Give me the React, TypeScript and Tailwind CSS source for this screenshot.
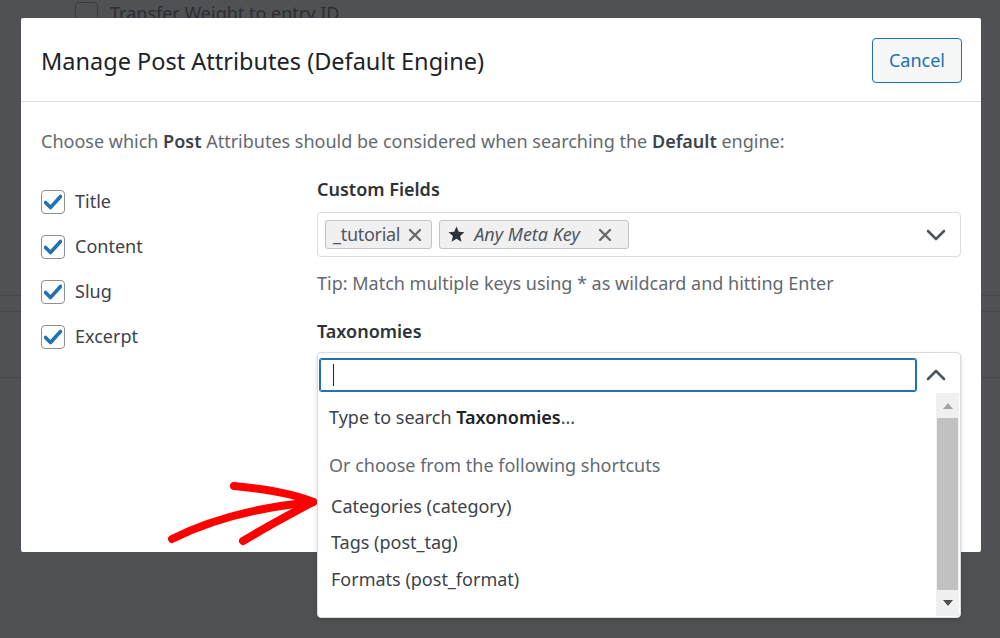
import React from 'react';

const font = { fontFamily: '"Noto Sans", "Open Sans", sans-serif' };

const CheckRow: React.FC<{ label: string }> = ({ label }) => (
  <label className="flex items-center gap-[10px] h-[45px]">
    <span className="w-[24px] h-[24px] rounded-[4px] border border-[#8c8f94] bg-white flex items-center justify-center">
      <svg width="18" height="16" viewBox="0 0 18 16">
        <path d="M1.5 8.5 L6.5 13.5 L16.5 2.5" fill="none" stroke="#2271b1" strokeWidth="3.6" strokeLinecap="round" strokeLinejoin="round" />
      </svg>
    </span>
    <span className="text-[18px] text-[#3c434a]">{label}</span>
  </label>
);

const XIcon = () => (
  <svg width="14" height="14" viewBox="0 0 14 14">
    <path d="M2 2 L12 12 M12 2 L2 12" stroke="#6b6b6b" strokeWidth="2.4" strokeLinecap="round" />
  </svg>
);

const Chevron: React.FC<{ up?: boolean }> = ({ up }) => (
  <svg width="20" height="12" viewBox="0 0 20 12">
    <path d={up ? 'M2 10 L10 2 L18 10' : 'M2 2 L10 10 L18 2'} fill="none" stroke="#50575e" strokeWidth="2.6" strokeLinecap="round" strokeLinejoin="round" />
  </svg>
);

export default function App() {
  return (
    <div className="relative w-[1000px] h-[638px] overflow-hidden bg-[#505155]" style={font}>
      {/* page behind the overlay */}
      <div className="flex items-center gap-[12px] pl-[75px] h-[26px]">
        <span className="w-[23px] h-[23px] rounded-[4px] border border-[#3a3b3f]" />
        <span className="text-[18px] text-[#2d2e32]">Transfer Weight to entry ID</span>
      </div>
      <div className="mt-[269px] h-[17px] border-y border-[#46474b]" />
      <div className="mt-[65px] border-t border-[#46474b]" />

      {/* modal */}
      <div className="absolute left-[21px] top-[18px] w-[960px] h-[534px] bg-white rounded-[2px]">
        <div className="flex items-center justify-between h-[84px] pt-[2px] pl-[20px] pr-[19px] border-b border-[#dcdcde]">
          <h1 className="mt-[2px] text-[23.5px] text-[#1d2327]">Manage Post Attributes (Default Engine)</h1>
          <button className="w-[90px] h-[45px] rounded-[4px] border border-[#2271b1] bg-[#f6f7f7] text-[#2271b1] text-[18px]">
            Cancel
          </button>
        </div>

        <div className="px-[20px] pt-[26px]">
          <p className="text-[18px] text-[#646970] leading-[26px]">
            Choose which <b className="font-semibold text-[#3c434a]">Post</b> Attributes should be considered when searching the{' '}
            <b className="font-semibold text-[#3c434a]">Default</b> engine:
          </p>

          <div className="flex mt-[22px]">
            <div className="w-[276px] pt-[3px]">
              <CheckRow label="Title" />
              <CheckRow label="Content" />
              <CheckRow label="Slug" />
              <CheckRow label="Excerpt" />
            </div>

            <div className="flex-1 pt-[1px]">
              <h2 className="text-[18px] font-semibold text-[#2c3338] leading-[24px]">Custom Fields</h2>
              <div className="mt-[11px] h-[45px] rounded-[4px] border border-[#dcdcde] flex items-center pl-[7px] pr-[14px]">
                <div className="flex flex-1 gap-[7px]">
                  <span className="h-[29px] flex items-center gap-[8px] pl-[7px] pr-[9px] rounded-[3px] border border-[#c3c4c7] bg-[#f0f0f1] text-[18px] text-[#50575e] tracking-[-0.3px]">
                    _tutorial <XIcon />
                  </span>
                  <span className="h-[29px] flex items-center gap-[8px] pl-[7px] pr-[16px] rounded-[3px] border border-[#c3c4c7] bg-[#f0f0f1] text-[18px] text-[#50575e]">
                    <svg width="19" height="19" viewBox="0 0 24 24">
                      <path d="M12 2 L14.9 8.6 L22 9.3 L16.6 14 L18.2 21 L12 17.3 L5.8 21 L7.4 14 L2 9.3 L9.1 8.6 Z" fill="#2c3338" />
                    </svg>
                    <i>Any Meta Key</i>
                    <span className="ml-[10px]"><XIcon /></span>
                  </span>
                </div>
                <Chevron />
              </div>
              <p className="mt-[14px] text-[18px] text-[#646970] leading-[24px]">
                Tip: Match multiple keys using * as wildcard and hitting Enter
              </p>

              <h2 className="mt-[24px] text-[18px] font-semibold text-[#2c3338] leading-[24px]">Taxonomies</h2>
              <div className="mt-[9px] h-[266px] rounded-[4px] border border-[#dcdcde] bg-white relative z-10 flex flex-col shadow-[0_2px_4px_rgba(0,0,0,0.15)]">
                <div className="flex items-center pt-[6px] pl-[2px] pr-[14px]">
                  <div className="w-[596px] h-[32px] rounded-[2px] border border-[#2271b1] shadow-[0_0_0_1px_#2271b1] flex items-center pl-[12px]">
                    <span className="w-[1px] h-[22px] bg-[#1d2327]" />
                  </div>
                  <div className="flex-1 flex justify-end">
                    <Chevron up />
                  </div>
                </div>
                <div className="flex flex-1 mt-[2px]">
                  <div className="flex-1 pl-[11px] text-[18px] text-[#3c434a]">
                    <p className="mt-[12px] leading-[24px]">
                      Type to search <b className="font-semibold text-[#1d2327]">Taxonomies</b>...
                    </p>
                    <p className="mt-[24px] leading-[24px] text-[#646970]">Or choose from the following shortcuts</p>
                    <p className="mt-[17px] leading-[24px] pl-[2px]">Categories (category)</p>
                    <p className="mt-[12px] leading-[24px] pl-[2px]">Tags (post_tag)</p>
                    <p className="mt-[13px] leading-[24px] pl-[2px]">Formats (post_format)</p>
                  </div>
                  <div className="w-[23px] mr-[1px] mb-[1px] bg-[#f0f0f0] flex flex-col items-center">
                    <div className="h-[25px] flex items-center">
                      <svg width="10" height="6" viewBox="0 0 10 6"><path d="M0 6 L5 0 L10 6 Z" fill="#a3a3a3" /></svg>
                    </div>
                    <div className="w-[21px] flex-1 bg-[#c1c1c1]" />
                    <div className="h-[26px] flex items-center">
                      <svg width="10" height="6" viewBox="0 0 10 6"><path d="M0 0 L10 0 L5 6 Z" fill="#505050" /></svg>
                    </div>
                  </div>
                </div>
              </div>
            </div>
          </div>
        </div>
      </div>

      {/* red annotation arrow */}
      <svg className="absolute left-[160px] top-[475px] pointer-events-none" width="170" height="80" viewBox="0 0 170 80">
        <g fill="none" stroke="#ff0000" strokeWidth="8" strokeLinecap="round" strokeLinejoin="round">
          <path d="M12 64 C50 45 100 32 153 27" />
          <path d="M74 11 C105 14 135 19 153 27" />
          <path d="M83 66 C108 51 132 38 153 27" />
        </g>
      </svg>
    </div>
  );
}
